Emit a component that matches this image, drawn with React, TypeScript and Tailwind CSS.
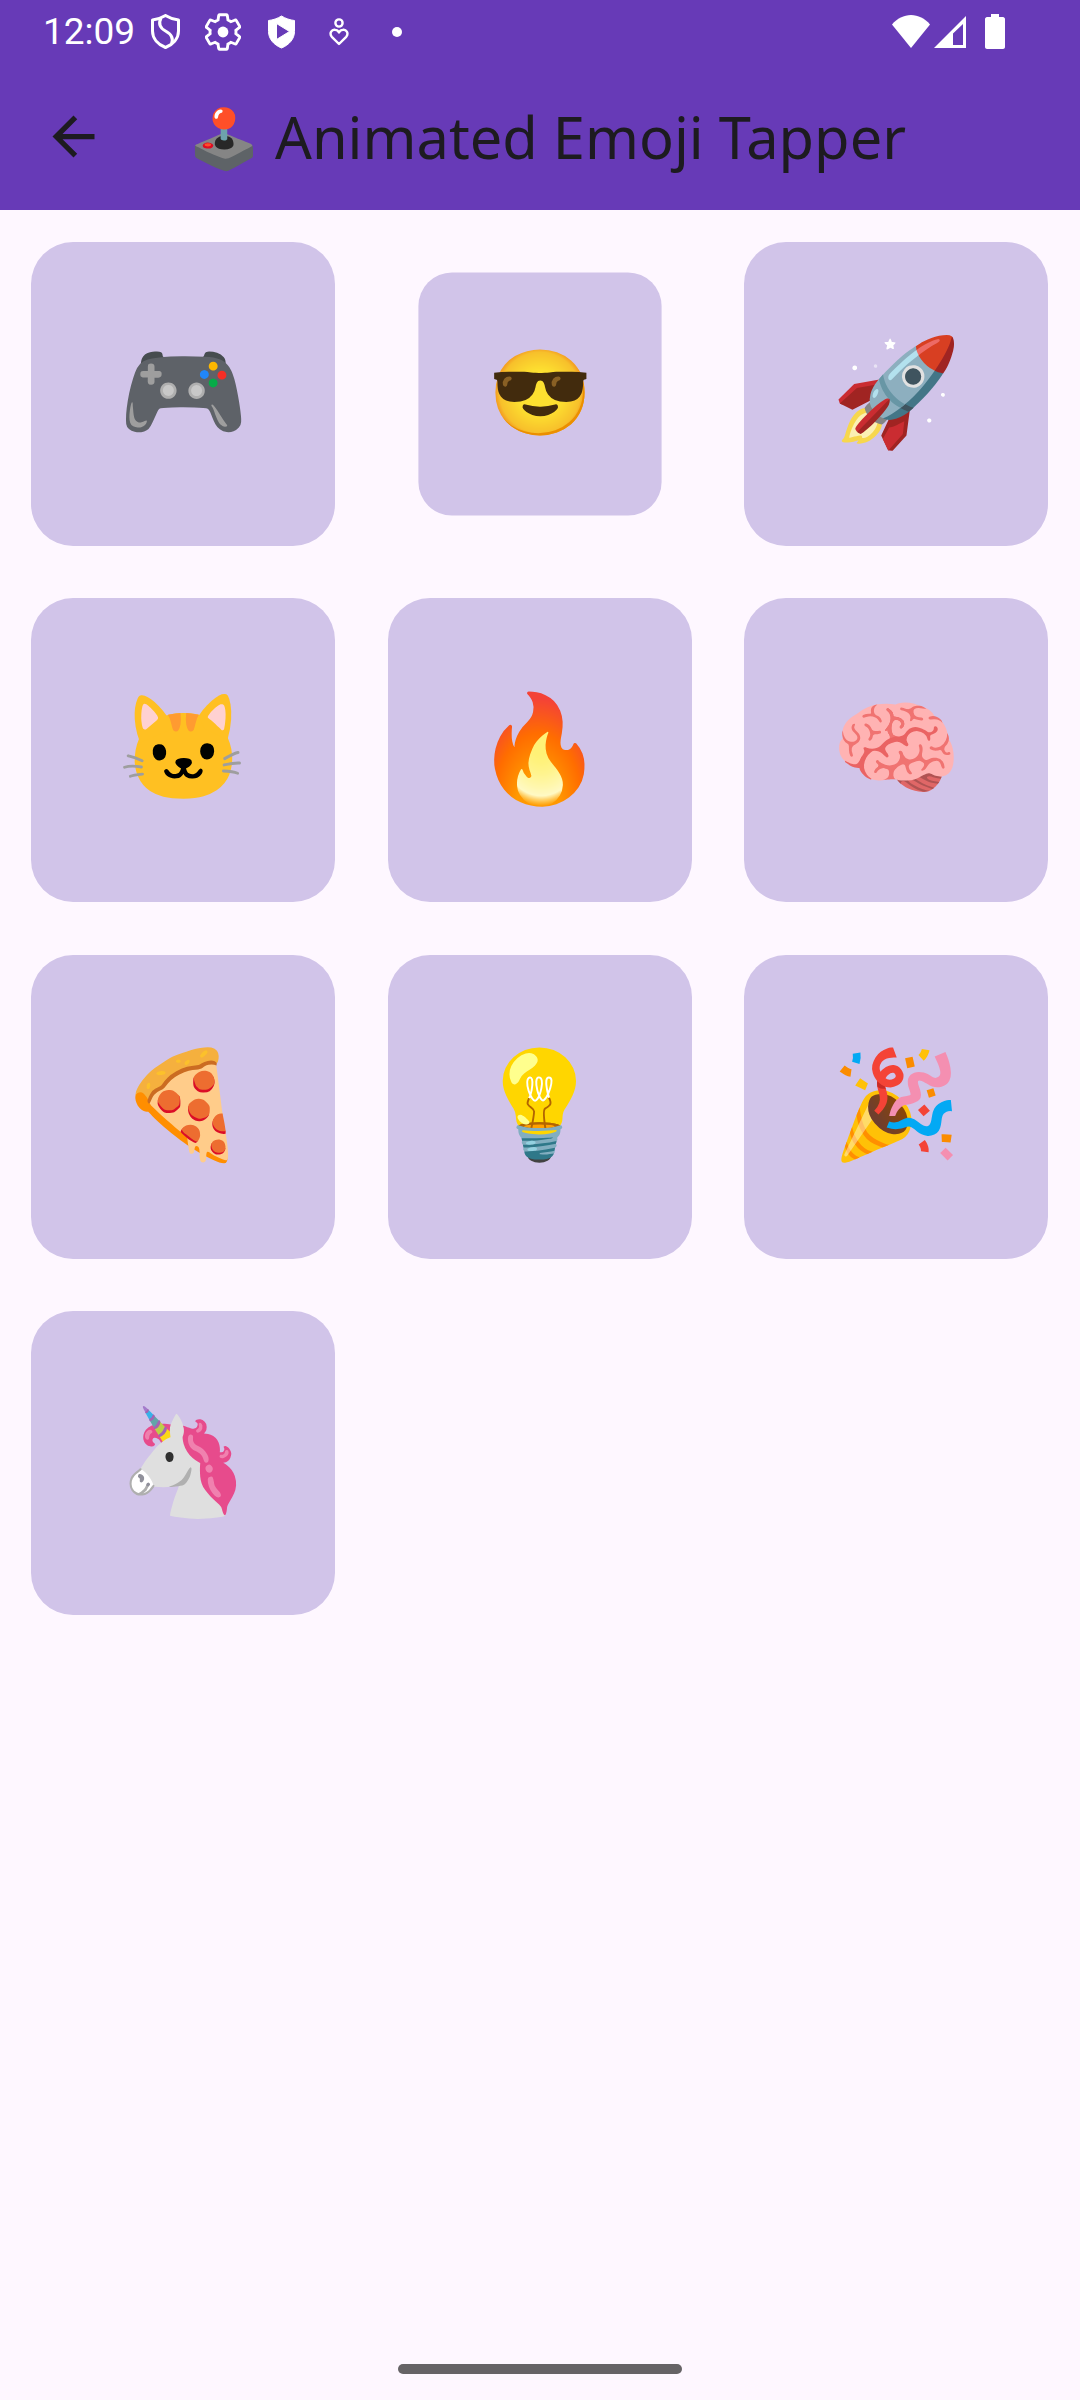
const emojis = ["🎮", "😎", "🚀", "🐱", "🔥", "🧠", "🍕", "💡", "🎉", "🦄"];

const shield = "M14.5 1.5C18.5 4 23 5.5 27.5 6V17C27.5 24.5 22 30.5 14.5 33.5C7 30.5 1.5 24.5 1.5 17V6C6 5.5 10.5 4 14.5 1.5Z";

const StatusBar = () => (
  <div className="h-[63px] pl-[43px] pr-[75px] flex items-center text-white">
    <span className="w-[108px] font-['Roboto',sans-serif] text-[37px] leading-none">12:09</span>
    {/* shield with s curve */}
    <svg width="29" height="35" viewBox="0 0 29 35" fill="none" stroke="white" strokeWidth="3">
      <path d={shield} strokeLinejoin="round" />
      <path d="M10 4C7 10 9 14 14.5 17C20 20 23 24 20.5 30" />
    </svg>
    <svg className="ml-[25px]" width="36" height="38" viewBox="2 2 20 20" fill="none" stroke="white" strokeWidth="1.6">
      <path d="M19.14 12.94c.04-.3.06-.61.06-.94 0-.32-.02-.64-.07-.94l2.03-1.58c.18-.14.23-.41.12-.61l-1.92-3.32c-.12-.22-.37-.29-.59-.22l-2.39.96c-.5-.38-1.03-.7-1.62-.94l-.36-2.54c-.04-.24-.24-.41-.48-.41h-3.84c-.24 0-.43.17-.47.41l-.36 2.54c-.59.24-1.13.57-1.62.94l-2.39-.96c-.22-.08-.47 0-.59.22L2.74 8.87c-.12.21-.08.47.12.61l2.03 1.58c-.05.3-.09.63-.09.94s.02.64.07.94l-2.03 1.58c-.18.14-.23.41-.12.61l1.92 3.32c.12.22.37.29.59.22l2.39-.96c.5.38 1.03.7 1.62.94l.36 2.54c.05.24.24.41.48.41h3.84c.24 0 .44-.17.47-.41l.36-2.54c.59-.24 1.13-.56 1.62-.94l2.39.96c.22.08.47 0 .59-.22l1.92-3.32c.12-.22.07-.47-.12-.61l-2.01-1.58z" />
      <circle cx="12" cy="12" r="3" fill="white" stroke="none" />
    </svg>
    {/* shield with play */}
    <svg className="ml-[26px]" width="29" height="36" viewBox="0 0 29 35">
      <path
        fill="white"
        fillRule="evenodd"
        d={`${shield} M9.5 9V25L22.5 17Z`}
        stroke="white"
        strokeWidth="1"
      />
    </svg>
    <svg className="ml-[33px]" width="20" height="28" viewBox="0 0 20 28" fill="none" stroke="white" strokeWidth="2.4">
      <circle cx="10" cy="5" r="3.6" />
      <path d="M10 26L2.8 18.8C-.2 15 3 11.2 6.2 11.8C8 12 9.2 13 10 14.5C10.8 13 12 12 13.8 11.8C17 11.2 20.2 15 17.2 18.8Z" strokeLinejoin="round" />
    </svg>
    <div className="ml-[43px] w-[10px] h-[10px] rounded-full bg-white" />
    <div className="flex-1" />
    <svg width="38" height="33" viewBox="0 0 38 33" fill="white">
      <path d="M0 9.5C5 3.5 12 0 19 0C26 0 33 3.5 38 9.5L19 33Z" />
    </svg>
    <svg className="ml-[4px]" width="32" height="32" viewBox="0 0 32 32" fill="white">
      <path fillRule="evenodd" d="M32 0V32H0ZM29 8L19 17.5V29H29Z" />
    </svg>
    <svg className="ml-[19px]" width="20" height="35" viewBox="0 0 20 35" fill="white">
      <path d="M6 0H14V3H18C19 3 20 4 20 5V33C20 34 19 35 18 35H2C1 35 0 34 0 33V5C0 4 1 3 2 3H6Z" />
    </svg>
  </div>
);

const App = () => {
  return (
    <div className="relative w-[1080px] h-[2400px] bg-[#fef7ff] font-['Noto_Sans',sans-serif] overflow-hidden">
      <div className="bg-[#673ab7] h-[210px] flex flex-col">
        <StatusBar />
        <div className="flex-1 flex items-center pl-[42px]">
          <svg width="63" height="63" viewBox="0 0 24 24" fill="#1d1b20">
            <path d="M20 11H7.83l5.59-5.59L12 4l-8 8 8 8 1.41-1.41L7.83 13H20v-2z" />
          </svg>
          <span className="ml-[83px] text-[57.75px] leading-none text-[#1d1b20]">🕹️ Animated Emoji Tapper</span>
        </div>
      </div>
      <div className="grid grid-cols-3 gap-[52.5px] pl-[31px] pr-[32px] pt-[31.5px]">
        {emojis.map((e, i) => (
          <div
            key={e}
            className={`h-[304px] rounded-[42px] bg-[#d1c4e9] flex items-center justify-center pb-[12px] text-[105px] leading-none ${i === 1 ? "scale-[0.8]" : ""}`}
          >
            {e}
          </div>
        ))}
      </div>
      <div className="absolute left-[398px] top-[2364px] w-[284px] h-[10px] rounded-full bg-[#666366]" />
    </div>
  );
};

export default App;
